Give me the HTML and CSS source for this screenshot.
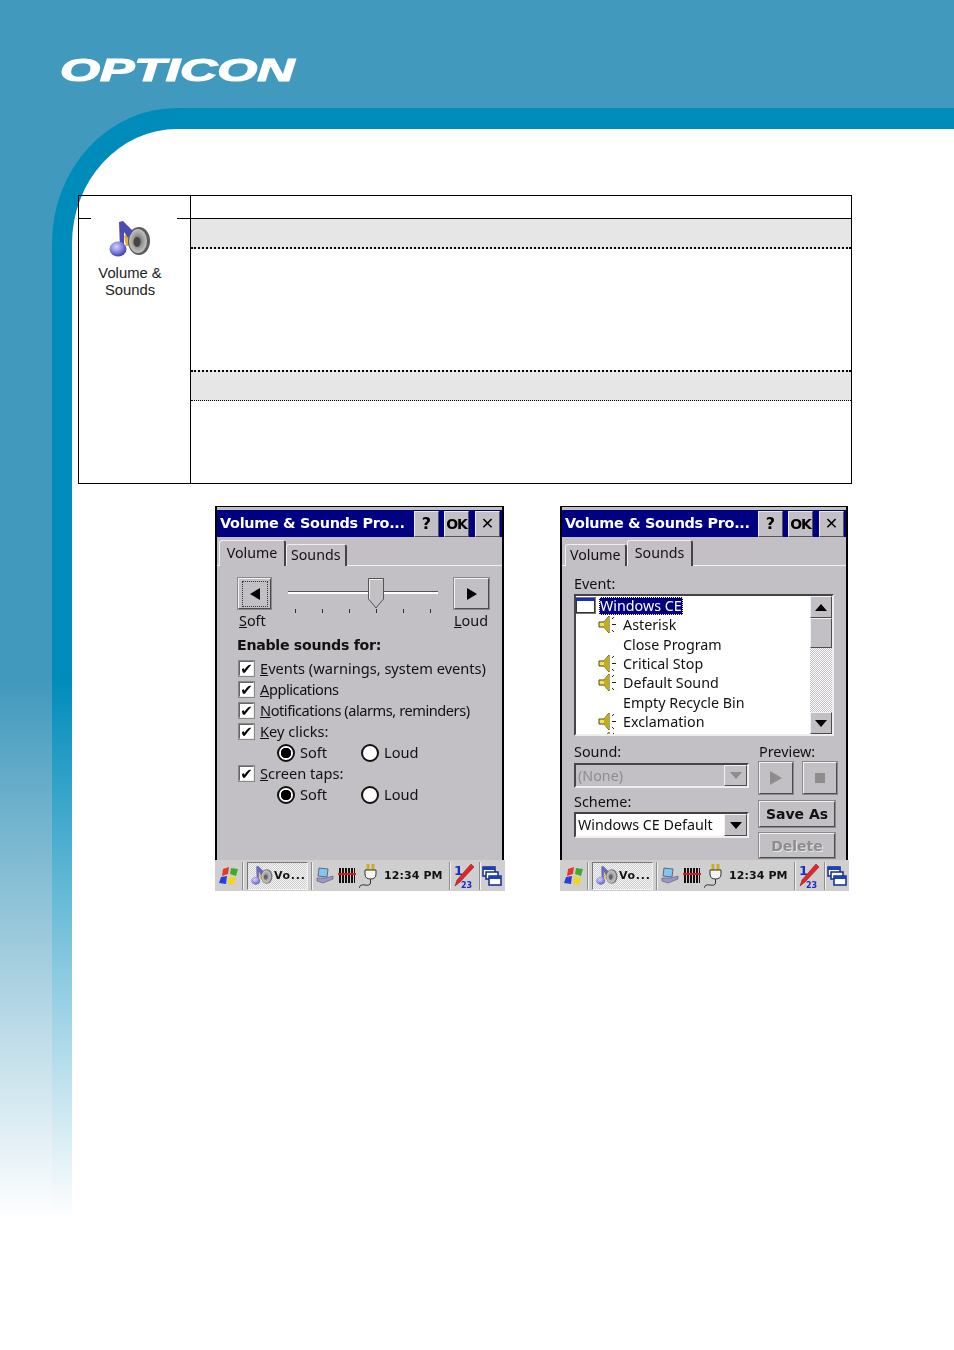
FILE: index.html
```html
<!DOCTYPE html>
<html lang="en">
<head>
    <meta charset="UTF-8">
    <meta name="viewport" content="width=device-width, initial-scale=1.0">
    <title>Volume &amp; Sounds</title>
    <link rel="stylesheet" href="styles.css">
</head>
<body>
    <!-- shared icons -->
    <svg class="defs" width="0" height="0">
        <defs>
            <radialGradient id="note-fill" cx="0.4" cy="0.35" r="0.7">
                <stop offset="0" stop-color="#d4d4f8"/>
                <stop offset="0.6" stop-color="#7676dc"/>
                <stop offset="1" stop-color="#34349a"/>
            </radialGradient>
            <radialGradient id="cone-fill" cx="0.5" cy="0.5" r="0.6">
                <stop offset="0" stop-color="#555"/>
                <stop offset="0.45" stop-color="#999"/>
                <stop offset="1" stop-color="#d5d5d5"/>
            </radialGradient>
            <symbol id="music" viewBox="0 0 42 38">
                <path d="M15 15 L25 9 L27 24 L17 25 Z" fill="#e8ad2e"/>
                <ellipse cx="30" cy="20" rx="11" ry="14" fill="#5c5c5c"/>
                <ellipse cx="29" cy="20" rx="9" ry="12" fill="url(#cone-fill)"/>
                <ellipse cx="28" cy="21" rx="3.500" ry="5" fill="#444"/>
                <path d="M10 1 L14 0 L19 5 L24 10 L19 17 L15 11 L15 28 L11 28 Z" fill="#4c4cb4"/>
                <ellipse cx="9" cy="28" rx="8.500" ry="7.500" fill="url(#note-fill)"/>
            </symbol>
            <symbol id="speaker" viewBox="0 0 20 19">
                <path d="M1 7 L6 7 L11 1 L11 18 L6 12 L1 12 Z" fill="#f2e25a" stroke="#4a4a10" stroke-width="1"/>
                <path d="M6 7 L6 12 L11 18 L11 1 Z" fill="#bfae22"/>
                <path d="M14 4 L16 2 M14 9.500 L18 9.500 M14 15 L16 17" stroke="#222" stroke-width="1" fill="none"/>
            </symbol>
            <symbol id="flag" viewBox="0 0 20 20">
                <path d="M4 3 L10 1 L9 8 L3 10 Z" fill="#e23a2a"/>
                <path d="M12 2 L19 3 L17 10 L11 8 Z" fill="#3faa2c"/>
                <path d="M2 11 L8 10 L7 18 L0 17 Z" fill="#2a3fd8"/>
                <path d="M10 10 L17 12 L15 19 L9 18 Z" fill="#f2d422"/>
            </symbol>
            <symbol id="laptop" viewBox="0 0 19 18">
                <path d="M4 1 L13 2 L12 10 L3 9 Z" fill="#7fc6f2" stroke="#667" stroke-width="1"/>
                <path d="M2 11 L11 11 L18 9 L18 12 L8 16 L2 14 Z" fill="#9a98c8" stroke="#556" stroke-width="0.600"/>
            </symbol>
            <symbol id="plug" viewBox="0 0 20 26">
                <path d="M9 1 L9 7 M14 1 L14 7" stroke="#c9b020" stroke-width="3"/>
                <path d="M6 7 L17 7 L17 11 Q17 16 11.500 16 Q6 16 6 11 Z" fill="#f5f5ee" stroke="#333" stroke-width="1"/>
                <path d="M11.500 16 L11.500 20 Q11 23 6 22 Q1 21 0 25" fill="none" stroke="#333" stroke-width="1"/>
            </symbol>
            <symbol id="pen" viewBox="0 0 21 26">
                <text x="1" y="12" class="pen-one">1</text>
                <text x="8" y="25" class="pen-num">23</text>
                <path d="M18 1 L21 4 L7 19 L2 23 L4 17 Z" fill="#e3262a" stroke="#7a1010" stroke-width="0.500"/>
            </symbol>
            <symbol id="windows" viewBox="0 0 20 20">
                <rect x="1" y="1" width="12" height="9" fill="#fff" stroke="#102a8c" stroke-width="1.500"/>
                <rect x="1" y="1" width="12" height="3" fill="#1a3fc0"/>
                <rect x="4" y="6" width="12" height="7" fill="#fff" stroke="#102a8c" stroke-width="1.500"/>
                <rect x="7" y="10" width="12" height="9" fill="#fff" stroke="#102a8c" stroke-width="1.500"/>
                <rect x="7" y="10" width="12" height="3" fill="#1a3fc0"/>
            </symbol>
        </defs>
    </svg>

    <div class="page">
        <header class="top">
            <span class="logo">OPTICON</span>
        </header>

        <div class="frame">
            <div class="sheet">

                <div class="info">
                    <div class="side">
                        <div class="side-top"></div>
                        <div class="app-icon">
                            <svg class="app-glyph"><use href="#music"/></svg>
                            <div class="app-name">Volume &amp;<br>Sounds</div>
                        </div>
                    </div>
                    <div class="main">
                        <div class="main-head"></div>
                        <div class="band band-first"></div>
                        <div class="blank"></div>
                        <div class="band band-second"></div>
                    </div>
                </div>

                <div class="shots">

                    <!-- Volume tab -->
                    <div class="device">
                        <div class="win">
                            <div class="titlebar">
                                <span class="title">Volume &amp; Sounds Pro...</span>
                                <span class="tbtn">?</span>
                                <span class="tbtn tbtn-ok">OK</span>
                                <span class="tbtn tbtn-x">✕</span>
                            </div>
                            <div class="tabs tabs-volume">
                                <span class="tab tab-on">Volume</span>
                                <span class="tab">Sounds</span>
                            </div>
                            <div class="volume">
                                <div class="slider-grid">
                                    <div class="btn arrow-btn focus">
                                        <svg width="14" height="14" viewBox="0 0 14 14"><polygon points="12,1 12,13 2,7" fill="#000"/></svg>
                                    </div>
                                    <div class="slider">
                                        <div class="track"></div>
                                        <div class="ticks"><i></i><i></i><i></i><i></i><i></i><i></i></div>
                                        <svg class="thumb" width="16" height="31" viewBox="0 0 16 31">
                                            <path d="M0.500 0.500 H15.500 V21 L8 30 L0.500 21 Z" fill="#c2c0c5" stroke="#555"/>
                                            <path d="M1.500 21 V1.500 H14" fill="none" stroke="#eee"/>
                                        </svg>
                                    </div>
                                    <div class="btn arrow-btn arrow-right">
                                        <svg width="14" height="14" viewBox="0 0 14 14"><polygon points="2,1 2,13 12,7" fill="#000"/></svg>
                                    </div>
                                    <div class="lbl slider-lbl"><u>S</u>oft</div>
                                    <div class="lbl slider-lbl"><u>L</u>oud</div>
                                </div>
                                <div class="enable">Enable sounds for:</div>
                                <div class="opts">
                                    <div class="opt"><span class="check">✔</span><span class="lbl"><u>E</u>vents (warnings, system events)</span></div>
                                    <div class="opt"><span class="check">✔</span><span class="lbl tight"><u>A</u>pplications</span></div>
                                    <div class="opt"><span class="check">✔</span><span class="lbl tight"><u>N</u>otifications (alarms, reminders)</span></div>
                                    <div class="opt"><span class="check">✔</span><span class="lbl"><u>K</u>ey clicks:</span></div>
                                    <div class="opt radios">
                                        <div class="radio-item"><span class="radio radio-on"></span><span class="lbl">Soft</span></div>
                                        <div class="radio-item"><span class="radio"></span><span class="lbl">Loud</span></div>
                                    </div>
                                    <div class="opt"><span class="check">✔</span><span class="lbl"><u>S</u>creen taps:</span></div>
                                    <div class="opt radios">
                                        <div class="radio-item"><span class="radio radio-on"></span><span class="lbl">Soft</span></div>
                                        <div class="radio-item"><span class="radio"></span><span class="lbl">Loud</span></div>
                                    </div>
                                </div>
                            </div>
                        </div>
                        <div class="taskbar">
                            <svg class="tb-flag"><use href="#flag"/></svg>
                            <i class="sep"></i>
                            <div class="task-btn"><svg class="tb-music"><use href="#music"/></svg><b>Vo...</b></div>
                            <i class="sep"></i>
                            <svg class="tb-laptop"><use href="#laptop"/></svg>
                            <div class="barcode"></div>
                            <svg class="tb-plug"><use href="#plug"/></svg>
                            <b class="clock">12:34 PM</b>
                            <i class="sep"></i>
                            <svg class="tb-pen"><use href="#pen"/></svg>
                            <i class="sep"></i>
                            <svg class="tb-windows"><use href="#windows"/></svg>
                        </div>
                    </div>

                    <!-- Sounds tab -->
                    <div class="device">
                        <div class="win">
                            <div class="titlebar">
                                <span class="title">Volume &amp; Sounds Pro...</span>
                                <span class="tbtn">?</span>
                                <span class="tbtn tbtn-ok">OK</span>
                                <span class="tbtn tbtn-x">✕</span>
                            </div>
                            <div class="tabs tabs-sounds">
                                <span class="tab">Volume</span>
                                <span class="tab tab-on">Sounds</span>
                            </div>
                            <div class="sounds">
                                <div class="lbl field-lbl">Event:</div>
                                <div class="listbox">
                                    <div class="tree">
                                        <div class="row row-root"><span class="tree-win"></span><span class="selected">Windows CE</span></div>
                                        <div class="row"><svg class="spk"><use href="#speaker"/></svg>Asterisk</div>
                                        <div class="row">Close Program</div>
                                        <div class="row"><svg class="spk"><use href="#speaker"/></svg>Critical Stop</div>
                                        <div class="row"><svg class="spk"><use href="#speaker"/></svg>Default Sound</div>
                                        <div class="row">Empty Recycle Bin</div>
                                        <div class="row"><svg class="spk"><use href="#speaker"/></svg>Exclamation</div>
                                        <div class="row"><svg class="spk"><use href="#speaker"/></svg>Infrared</div>
                                    </div>
                                    <div class="scrollbar">
                                        <div class="btn sb-btn"><svg width="12" height="7" viewBox="0 0 12 7"><polygon points="6,0 12,7 0,7" fill="#000"/></svg></div>
                                        <div class="btn sb-thumb"></div>
                                        <div class="sb-track"></div>
                                        <div class="btn sb-btn"><svg width="12" height="7" viewBox="0 0 12 7"><polygon points="0,0 12,0 6,7" fill="#000"/></svg></div>
                                    </div>
                                </div>
                                <div class="lower">
                                    <div class="lower-left">
                                        <div class="lbl field-lbl">Sound:</div>
                                        <div class="combo combo-off">
                                            <span class="combo-text">(None)</span>
                                            <span class="btn combo-btn"><svg width="12" height="7" viewBox="0 0 12 7"><polygon points="0,0 12,0 6,7" fill="#8d8d8d"/></svg></span>
                                        </div>
                                        <div class="lbl field-lbl scheme-lbl">Scheme:</div>
                                        <div class="combo">
                                            <span class="combo-text">Windows CE Default</span>
                                            <span class="btn combo-btn"><svg width="12" height="7" viewBox="0 0 12 7"><polygon points="0,0 12,0 6,7" fill="#000"/></svg></span>
                                        </div>
                                    </div>
                                    <div class="lower-right">
                                        <div class="lbl field-lbl">Preview:</div>
                                        <div class="preview">
                                            <div class="btn media-btn"><svg width="14" height="14" viewBox="0 0 14 14"><polygon points="1,0 1,14 13,7" fill="#8d8d8d"/></svg></div>
                                            <div class="btn media-btn"><svg width="10" height="10" viewBox="0 0 10 10"><rect width="10" height="10" fill="#8d8d8d"/></svg></div>
                                        </div>
                                        <div class="btn push-btn">Save As</div>
                                        <div class="btn push-btn push-off">Delete</div>
                                    </div>
                                </div>
                            </div>
                        </div>
                        <div class="taskbar">
                            <svg class="tb-flag"><use href="#flag"/></svg>
                            <i class="sep"></i>
                            <div class="task-btn"><svg class="tb-music"><use href="#music"/></svg><b>Vo...</b></div>
                            <i class="sep"></i>
                            <svg class="tb-laptop"><use href="#laptop"/></svg>
                            <div class="barcode"></div>
                            <svg class="tb-plug"><use href="#plug"/></svg>
                            <b class="clock">12:34 PM</b>
                            <i class="sep"></i>
                            <svg class="tb-pen"><use href="#pen"/></svg>
                            <i class="sep"></i>
                            <svg class="tb-windows"><use href="#windows"/></svg>
                        </div>
                    </div>

                </div>
            </div>
        </div>
    </div>
</body>
</html>
```

FILE: styles.css
```css
/* Page frame */
body {
    margin: 0;
    font-family: 'Noto Sans', sans-serif;
}

.defs {
    display: block;
    height: 0;
}

.page {
    width: 954px;
    height: 1350px;
    overflow: hidden;
    background: linear-gradient(#4199bd 680px, #fff 1220px);
}

.top {
    height: 108px;
    box-sizing: border-box;
    padding: 55px 0 0 60px;
}

.logo {
    display: inline-block;
    font: italic bold 31px/31px 'Liberation Sans', sans-serif;
    color: #fff;
    -webkit-text-stroke: 1.200px #fff;
    transform: scaleX(1.66);
    transform-origin: left top;
}

.frame {
    margin-left: 52px;
    height: 1242px;
    box-sizing: border-box;
    padding: 21px 0 0 20px;
    border-top-left-radius: 125px 135px;
    background: linear-gradient(#008cbb 572px, #fff 1112px);
}

.sheet {
    height: 1221px;
    box-sizing: border-box;
    padding: 66px 0 0 6px;
    background: #fff;
    border-top-left-radius: 105px 115px;
}

/* Table above the screenshots */
.info {
    display: grid;
    grid-template-columns: 112px 1fr;
    width: 774px;
    height: 289px;
    box-sizing: border-box;
    border: 1px solid #000;
}

.side {
    border-right: 1px solid #000;
}

.side-top {
    height: 22px;
    border-bottom: 1px solid #000;
}

.app-icon {
    width: 86px;
    height: 80px;
    margin: -1px 0 0 12px;
    background: #fff;
    position: relative;
}

.app-glyph {
    display: block;
    width: 42px;
    height: 38px;
    margin-left: 18px;
    padding-top: 3px;
}

.app-name {
    width: 78px;
    margin-top: 6px;
    font: 14.800px/17px 'Liberation Sans', sans-serif;
    text-align: center;
    color: #222;
}

.main-head {
    height: 22px;
    border-bottom: 1px solid #000;
}

.band {
    height: 28px;
    background: #e6e6e6;
}

.band-first {
    border-bottom: 2px dotted #000;
}

.blank {
    height: 121px;
}

.band-second {
    border-top: 2px dotted #000;
    border-bottom: 1px dotted #000;
}

/* Device screenshots */
.shots {
    display: flex;
    gap: 55px;
    margin: 22px 0 0 137px;
}

.device {
    width: 290px;
    height: 385px;
    filter: blur(0.35px);
    font-size: 14.400px;
    color: #111;
}

.device + .device {
    width: 289px;
}

.win {
    height: 354px;
    box-sizing: border-box;
    margin-right: 1px;
    border: 2px solid #000;
    border-top: 1px solid #000;
    border-bottom: 0;
    background: #c2c0c5;
    overflow: hidden;
}

.titlebar {
    display: flex;
    align-items: center;
    gap: 5px;
    height: 27px;
    margin-top: 3px;
    padding-right: 2px;
    background: #000080;
}

.title {
    flex: 1;
    padding-left: 3px;
    font: bold 14.400px/25px 'DejaVu Sans', sans-serif;
    letter-spacing: -0.300px;
    color: #fff;
    white-space: nowrap;
}

.tbtn {
    width: 25px;
    height: 26px;
    box-sizing: border-box;
    background: #c2c0c5;
    border: 1px solid;
    border-color: #eee #555 #555 #eee;
    font: bold 16px/24px 'DejaVu Sans', sans-serif;
    text-align: center;
    color: #000;
}

.tbtn-ok {
    font-size: 14px;
    letter-spacing: -1px;
}

.tbtn-x {
    margin-left: 1px;
    font-weight: normal;
    font-size: 16px;
}

.tabs {
    display: flex;
    align-items: flex-end;
    height: 29px;
    box-sizing: border-box;
    padding-left: 2px;
    border-bottom: 1px solid #f0f0f0;
    font-size: 14.200px;
}

.tab {
    height: 22px;
    margin-bottom: -1px;
    padding: 0 4px;
    box-sizing: border-box;
    border: 1px solid #eee;
    border-right: 2px solid #444;
    border-bottom: 0;
    border-radius: 3px 3px 0 0;
    line-height: 20px;
    background: #c2c0c5;
}

.tabs-volume .tab {
    width: 61px;
}

.tabs-volume .tab-on {
    width: 67px;
}

.tabs-sounds .tab {
    width: 62px;
    margin-left: 1px;
}

.tabs-sounds .tab-on {
    width: 66px;
    margin-left: 0;
}

.tab-on {
    position: relative;
    height: 26px;
    line-height: 23px;
    text-align: center;
    padding: 0;
}

.tab-on + .tab {
    margin-left: 0;
}

.btn {
    display: flex;
    align-items: center;
    justify-content: center;
    box-sizing: border-box;
    background: #c2c0c5;
    border: 1px solid;
    border-color: #f2f2f2 #4c4c4c #4c4c4c #f2f2f2;
    box-shadow: 0 0 0 1px #8a8a8a;
}

/* Volume tab */
.volume {
    padding: 12px 0 0 21px;
}

.slider-grid {
    display: grid;
    grid-template-columns: 33px 150px 34px;
    grid-template-rows: 31px 21px;
    column-gap: 17px;
    row-gap: 1px;
}

.focus svg {
    outline: 1px dotted #333;
    outline-offset: 5px;
}

.arrow-btn {
    grid-row: 1;
}

.arrow-right {
    margin-left: -1px;
}

.slider {
    grid-row: 1 / span 2;
    position: relative;
}

.track {
    height: 3px;
    margin-top: 13px;
    background: linear-gradient(#555 1px, #fff 1px);
}

.ticks {
    display: flex;
    justify-content: space-between;
    margin: 15px 7px 0;
}

.ticks i {
    width: 1px;
    height: 4px;
    background: #333;
}

.thumb {
    position: absolute;
    left: 80px;
    top: 0;
}

.slider-lbl {
    padding-left: 1px;
    line-height: 21px;
    white-space: nowrap;
}

.slider-lbl:first-of-type {
    grid-column: 1;
}

.slider-lbl:last-child {
    grid-column: 3;
    margin-left: -2px;
}

.lbl {
    white-space: nowrap;
}

.enable {
    margin: 5px 0 0 -1px;
    font: bold 14.200px/18px 'DejaVu Sans', sans-serif;
    letter-spacing: -0.300px;
}

.opts {
    display: flex;
    flex-direction: column;
    gap: 4px;
    margin-top: 6px;
    font-size: 14.600px;
}

.opts .lbl {
    margin-bottom: 2px;
}

.opts .tight {
    letter-spacing: -0.450px;
}

.opt {
    display: flex;
    align-items: center;
    gap: 5px;
    height: 17px;
}

.check {
    width: 17px;
    height: 17px;
    box-sizing: border-box;
    border: 2px solid;
    border-color: #666 #eee #eee #666;
    outline: 1px solid #888;
    outline-offset: -1px;
    background: #fff;
    font: bold 15px/14px 'DejaVu Sans', sans-serif;
    text-align: center;
    color: #000;
}

.radios {
    padding-left: 39px;
    gap: 0;
}

.radio-item {
    display: flex;
    align-items: center;
    gap: 5px;
    width: 84px;
}

.radio {
    width: 18px;
    height: 18px;
    box-sizing: border-box;
    border: 2px solid #111;
    border-radius: 50%;
    background: #fff;
}

.radio-on {
    background: radial-gradient(circle, #000 5px, #fff 5.500px);
}

/* Sounds tab */
.sounds {
    padding: 8px 0 0 12px;
}

.field-lbl {
    height: 18px;
    line-height: 20px;
}

.listbox {
    display: flex;
    width: 260px;
    height: 142px;
    margin-top: 2px;
    box-sizing: border-box;
    border: 2px solid;
    border-color: #444 #eee #eee #444;
    background: #fff;
    overflow: hidden;
}

.tree {
    flex: 1;
    overflow: hidden;
    font-size: 14.300px;
}

.row {
    display: flex;
    align-items: center;
    height: 19.300px;
    padding-left: 47px;
    line-height: 19px;
    white-space: nowrap;
}

.row-root {
    padding-left: 0;
    gap: 4px;
}

.tree-win {
    width: 19px;
    height: 15px;
    box-sizing: border-box;
    border: 1px solid #333;
    border-top: 3px solid #1a2cc0;
    outline: 1px solid #777;
    background: #fff;
}

.selected {
    padding: 0 1px;
    background: #000080;
    color: #fff;
    outline: 1px dotted #fff08a;
    outline-offset: -1px;
    height: 18px;
    line-height: 18px;
}

.spk {
    width: 20px;
    height: 19px;
    margin-left: -25px;
    margin-right: 5px;
}

.scrollbar {
    display: flex;
    flex-direction: column;
    width: 22px;
}

.sb-btn {
    height: 22px;
    box-shadow: none;
}

.sb-thumb {
    height: 30px;
    box-shadow: none;
}

.sb-track {
    flex: 1;
    background: repeating-conic-gradient(#c2c0c5 0 25%, #fff 0 50%) 0 0 / 2px 2px;
}

.lower {
    display: flex;
    gap: 10px;
    margin-top: 6px;
}

.lower-left {
    width: 175px;
}

.lower-right {
    width: 78px;
}

.combo {
    display: flex;
    height: 26px;
    margin-top: 2px;
    box-sizing: border-box;
    border: 2px solid;
    border-color: #444 #eee #eee #444;
    background: #fff;
    font-size: 14.300px;
}

.combo-off {
    height: 25px;
    margin-top: 3px;
    background: #c2c0c5;
    color: #8d8d8d;
}

.combo-text {
    flex: 1;
    padding-left: 2px;
    line-height: 21px;
    white-space: nowrap;
}

.combo-btn {
    width: 23px;
    box-shadow: none;
}

.scheme-lbl {
    margin-top: 4px;
}

.preview {
    display: flex;
    gap: 10px;
    margin: 2px 0 7px;
    width: 78px;
}

.media-btn {
    flex: none;
    width: 34px;
    height: 32px;
}

.push-btn {
    width: 76px;
    height: 26px;
    margin-bottom: 6px;
    font: bold 14px/24px 'DejaVu Sans', sans-serif;
}

.push-off {
    height: 25px;
    color: #8d8d8d;
    text-shadow: 1px 1px 0 #e6e6e6;
}

/* Taskbar */
.taskbar {
    display: flex;
    align-items: center;
    height: 31px;
    background: #d0cfd0;
}

.sep {
    width: 1px;
    height: 28px;
    background: #8d8d8d;
    border-right: 1px solid #f2f2f2;
}

.taskbar svg {
    flex: none;
}

.tb-flag {
    width: 20px;
    height: 20px;
    margin: 0 3px 0 4px;
}

.task-btn {
    display: flex;
    align-items: center;
    gap: 1px;
    width: 61px;
    height: 28px;
    box-sizing: border-box;
    margin: 0 3px;
    padding-left: 3px;
    border: 1px solid;
    border-color: #777 #f2f2f2 #f2f2f2 #777;
    background: repeating-conic-gradient(#d0cfd0 0 25%, #f4f4f4 0 50%) 0 0 / 2px 2px;
}

.task-btn b {
    font: bold 11px 'DejaVu Sans', sans-serif;
    letter-spacing: 0.700px;
}

.tb-music {
    width: 22px;
    height: 20px;
    opacity: 0.800;
}

.tb-laptop {
    width: 19px;
    height: 18px;
    margin: 0 5px 0 2px;
}

.barcode {
    position: relative;
    width: 16px;
    height: 15px;
    background: repeating-linear-gradient(90deg, #111 0 2px, transparent 2px 3px);
}

.barcode::after {
    content: "";
    position: absolute;
    left: -1px;
    right: -1px;
    top: 5px;
    height: 2px;
    background: #e01818;
}

.tb-plug {
    width: 20px;
    height: 26px;
    margin: 0 5px 0 4px;
}

.clock {
    width: 65px;
    font: bold 11px 'DejaVu Sans', sans-serif;
    letter-spacing: 0.100px;
    white-space: nowrap;
}

.tb-pen {
    width: 21px;
    height: 26px;
    margin: 0 5px 0 2px;
}

.pen-one {
    font: bold 13px 'DejaVu Sans', sans-serif;
    fill: #1a2cc8;
}

.pen-num {
    font: bold 8px 'DejaVu Sans', sans-serif;
    fill: #1a2cc8;
}

.tb-windows {
    width: 20px;
    height: 20px;
    margin-left: 1px;
}
```
